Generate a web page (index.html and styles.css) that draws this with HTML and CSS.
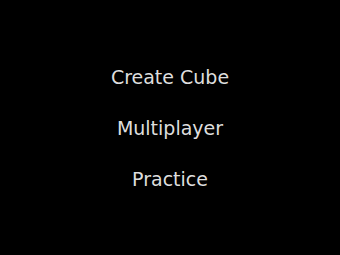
FILE: index.html
```html
<!DOCTYPE html>
<html>
<head>
<meta charset="utf-8">
<link rel="stylesheet" href="styles.css">
</head>
<body>
<div class="menu">
  <div class="item">Create Cube</div>
  <div class="item">Multiplayer</div>
  <div class="item">Practice</div>
</div>
</body>
</html>
```
FILE: styles.css
```css
html, body {
  margin: 0;
  padding: 0;
  background: #000;
  height: 100%;
}
.menu {
  height: 100%;
  display: flex;
  flex-direction: column;
  align-items: center;
  justify-content: center;
  gap: 27px;
}
.item {
  font-family: "DejaVu Sans", sans-serif;
  font-size: 19px;
  line-height: 24px;
  color: #dedede;
}
```
